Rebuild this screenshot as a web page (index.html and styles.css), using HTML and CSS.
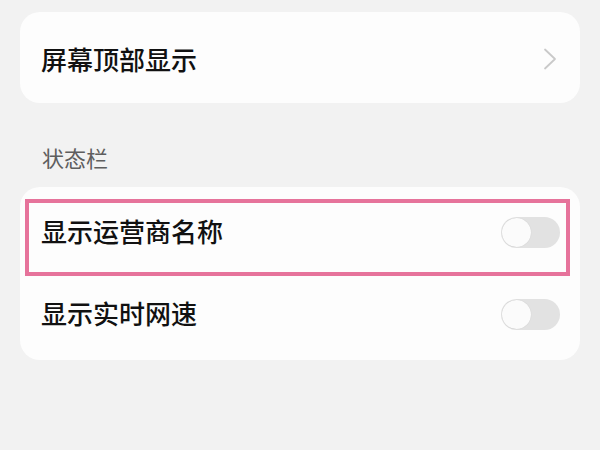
FILE: index.html
```html
<!DOCTYPE html>
<html lang="zh-CN">
<head>
<meta charset="utf-8">
<link rel="stylesheet" href="styles.css">
</head>
<body>
<div class="page">
  <div class="card card-top">
    <div class="row row-nav">
      <span class="label">屏幕顶部显示</span>
      <svg class="chevron" width="14" height="22" viewBox="0 0 14 22"><polyline points="2,1.5 12,11 2,20.5" fill="none" stroke="#c9c9c9" stroke-width="1.8" stroke-linecap="round" stroke-linejoin="round"/></svg>
    </div>
  </div>
  <div class="section">状态栏</div>
  <div class="card card-list">
    <div class="row row-toggle highlighted">
      <span class="label">显示运营商名称</span>
      <span class="toggle"><span class="knob"></span></span>
    </div>
    <div class="row row-toggle">
      <span class="label">显示实时网速</span>
      <span class="toggle"><span class="knob"></span></span>
    </div>
  </div>
</div>
</body>
</html>
```
FILE: styles.css
```css
html, body {
  margin: 0;
  padding: 0;
  background: #f2f2f2;
}
body {
  font-family: "Noto Sans CJK SC", "Noto Sans", sans-serif;
  width: 600px;
  height: 450px;
  overflow: hidden;
}
.page {
  padding: 12px 20px 0 20px;
}
.card {
  background: #fdfdfd;
  border-radius: 20px;
}
.card-top {
  height: 91px;
  display: flex;
  flex-direction: column;
}
.row {
  display: flex;
  align-items: center;
  justify-content: space-between;
  position: relative;
}
.row-nav {
  flex: 1;
  padding: 3px 23px 0 21px;
}
.label {
  font-size: 26px;
  font-weight: 500;
  color: #111111;
  line-height: 30px;
}
.chevron {
  display: block;
}
.section {
  margin: 39px 0 15px 0;
  padding-left: 22px;
  font-size: 22px;
  line-height: 30px;
  color: #5e5e5e;
}
.card-list {
  padding: 4px 0 5px 0;
}
.row-toggle {
  height: 82px;
  padding: 0 20px 0 21px;
}
.row-toggle .label {
  margin-top: -3px;
}
.highlighted::after {
  content: "";
  position: absolute;
  top: 8px;
  bottom: -3px;
  left: 5px;
  right: 10px;
  border: 4px solid #e6739b;
  pointer-events: none;
}
.toggle {
  width: 59px;
  height: 31px;
  border-radius: 16px;
  background: #e2e2e2;
  display: flex;
  align-items: center;
  padding: 0 1px;
  box-sizing: border-box;
}
.knob {
  width: 29px;
  height: 29px;
  border-radius: 50%;
  background: #fbfbfb;
  box-shadow: 0 0 1px rgba(0,0,0,0.15);
}
```
